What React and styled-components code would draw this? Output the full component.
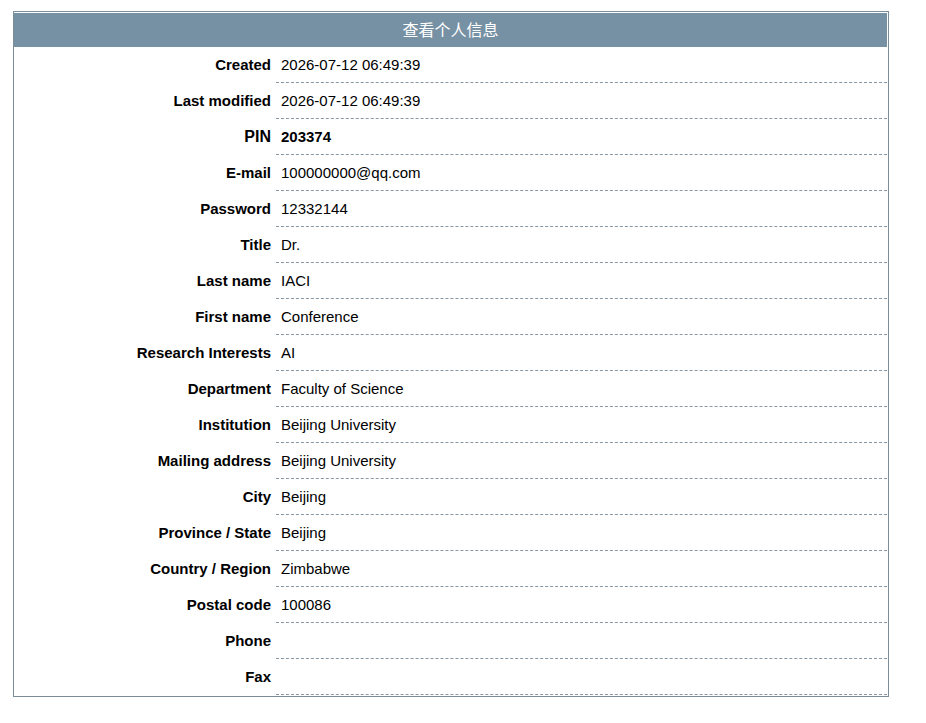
import React from 'react';
import styled, { createGlobalStyle } from 'styled-components';

const GlobalStyle = createGlobalStyle`
  body {
    margin: 8px;
    background: #fff;
    font-family: "Liberation Sans", Arial, sans-serif;
    font-size: 15px;
    color: #000;
  }
`;

const rows = [
  { label: 'Created', value: '2026-07-12 06:49:39' },
  { label: 'Last modified', value: '2026-07-12 06:49:39' },
  { label: 'PIN', value: '203374', strong: true },
  { label: 'E-mail', value: '100000000@qq.com' },
  { label: 'Password', value: '12332144' },
  { label: 'Title', value: 'Dr.' },
  { label: 'Last name', value: 'IACI' },
  { label: 'First name', value: 'Conference' },
  { label: 'Research Interests', value: 'AI' },
  { label: 'Department', value: 'Faculty of Science' },
  { label: 'Institution', value: 'Beijing University' },
  { label: 'Mailing address', value: 'Beijing University' },
  { label: 'City', value: 'Beijing' },
  { label: 'Province / State', value: 'Beijing' },
  { label: 'Country / Region', value: 'Zimbabwe' },
  { label: 'Postal code', value: '100086' },
  { label: 'Phone', value: '' },
  { label: 'Fax', value: '' },
];

const App = () => {
  return (
    <>
      <GlobalStyle />
      <Panel>
        <Header>查看个人信息</Header>
        {rows.map(row => (
          <Row key={row.label}>
            <Label big={row.strong}>{row.label}</Label>
            <Value strong={row.strong}>{row.value}</Value>
          </Row>
        ))}
      </Panel>
    </>
  );
};
export default App;

const Panel = styled.div`
  width: 873px;
  margin: 3px 0 0 5px;
  border: 1px solid #7d8d98;
  padding: 1px 1px 1px 0;
  box-sizing: content-box;
`;

const Header = styled.div`
  height: 34px;
  line-height: 33px;
  background-color: #7791a4;
  color: #fff;
  text-align: center;
  font-family: "Noto Sans CJK SC", "Liberation Sans", sans-serif;
  font-size: 16px;
`;

const Row = styled.div`
  display: flex;
  height: 36px;
`;

const Label = styled.div`
  width: 262px;
  flex-shrink: 0;
  box-sizing: border-box;
  padding-right: 5px;
  text-align: right;
  font-weight: bold;
  font-size: ${p => (p.big ? '16px' : '15px')};
  line-height: 36px;
`;

const Value = styled.div`
  flex: 1;
  box-sizing: border-box;
  padding-left: 5px;
  line-height: 35px;
  border-bottom: 1px dashed #8797a3;
  font-weight: ${p => (p.strong ? 'bold' : 'normal')};
`;
